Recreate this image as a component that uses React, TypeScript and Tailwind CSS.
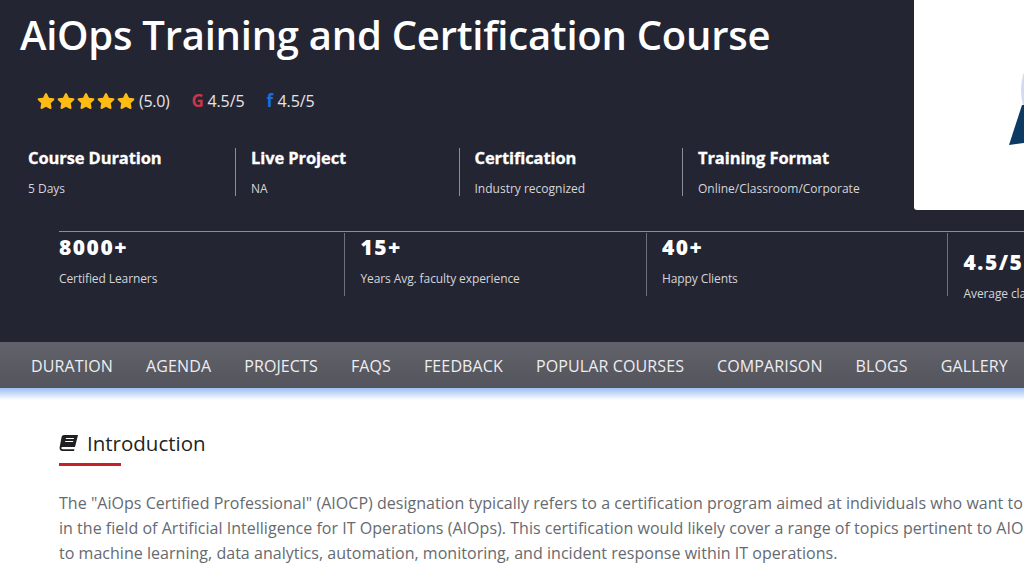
import { FaStar } from "react-icons/fa";

const facts = [
  { title: "Course Duration", value: "5 Days" },
  { title: "Live Project", value: "NA" },
  { title: "Certification", value: "Industry recognized" },
  { title: "Training Format", value: "Online/Classroom/Corporate" },
];

const stats = [
  { top: "8000+", label: "Certified Learners" },
  { top: "15+", label: "Years Avg. faculty experience" },
  { top: "40+", label: "Happy Clients" },
  { top: "4.5/5", label: "Average class rating" },
];

const navItems = ["DURATION", "AGENDA", "PROJECTS", "FAQS", "FEEDBACK", "POPULAR COURSES", "COMPARISON", "BLOGS", "GALLERY"];

export default function App() {
  return (
    <div className="w-[1024px] h-[576px] overflow-hidden bg-white font-['Open_Sans','Noto_Sans',sans-serif]">
      {/* hero */}
      <section className="h-[342px] bg-[#242533] text-white overflow-hidden">
        <div className="flex h-[210px]">
          <div className="w-[914px] shrink-0">
            <h1 className="pl-5 pt-[10px] text-[40px] leading-[50px] font-semibold tracking-[-0.25px] whitespace-nowrap">
              AiOps Training and Certification Course
            </h1>

            <div className="flex items-center pl-[37px] mt-[29px] h-[24px] text-[16px] text-[#e4e4e8]">
              <div className="flex gap-[2px]">
                {[0, 1, 2, 3, 4].map((i) => (
                  <FaStar key={i} size={18} className="text-[#fdbb13]" />
                ))}
              </div>
              <span className="ml-[4px] tracking-[-0.3px]">(5.0)</span>
              <span className="ml-[22px] w-[14px] font-bold text-[17px] text-[#c8364a]">G</span>
              <span className="ml-[2px] tracking-[-0.1px]">4.5/5</span>
              <span className="ml-[22px] w-[8px] font-bold text-[17px] text-[#1570e0]">f</span>
              <span className="ml-[3px] tracking-[-0.1px]">4.5/5</span>
            </div>

            {/* course facts */}
            <div className="flex pl-[28px] mt-[35px]">
              {facts.map((f, i) => (
                <div key={f.title} className={i === 0 ? "w-[207px]" : "w-[223.5px] border-l border-[#8d8e99] pl-[15px]"}>
                  <div className="text-[16.5px] leading-[20px] font-bold tracking-[-0.1px] [-webkit-text-stroke:0.3px_white] whitespace-nowrap">{f.title}</div>
                  <div className="mt-[13px] text-[12px] leading-[15px] text-[#d5d5da] whitespace-nowrap">{f.value}</div>
                </div>
              ))}
            </div>
          </div>

          <div className="flex-1 bg-white rounded-bl-[3px] overflow-hidden">
            {/* visible bit of the course logo */}
            <svg width="110" height="210" viewBox="0 0 110 210">
              <ellipse cx="130" cy="90" rx="23" ry="36" fill="#d5d8f5" />
              <path d="M108 105 L110 105 L110 143 L95 145 Z" fill="#0d3a63" />
            </svg>
          </div>
        </div>

        {/* stats */}
        <div className="ml-[59px] mt-[21px] w-[1200px] border-t border-[#8d8e99] flex">
          {stats.map((s, i) => (
            <div
              key={s.top}
              className={
                i === 0
                  ? "w-[285px] h-[63px] mt-[1px]"
                  : "w-[301.5px] h-[63px] mt-[1px] border-l border-[#6f707c] pl-[15.5px]"
              }
            >
              <div className={`font-extrabold text-[21px] leading-[26px] tracking-[1.5px] ${i === 3 ? "mt-[16px]" : "mt-[1px]"}`}>
                {s.top}
              </div>
              <div className="mt-[10px] text-[12px] leading-[17px] tracking-[-0.1px] text-[#d5d5da] whitespace-nowrap">{s.label}</div>
            </div>
          ))}
        </div>
      </section>

      {/* section nav */}
      <nav className="h-[46px] pt-[1px] bg-gradient-to-b from-[#62626b] to-[#54545d] flex items-center gap-[33px] pl-[31px] text-[16px] tracking-[0.12px] text-[#eeeef0] whitespace-nowrap">
        {navItems.map((n) => (
          <span key={n}>{n}</span>
        ))}
      </nav>
      <div className="h-[12px] bg-gradient-to-b from-[#9dbdf2] to-white" />

      {/* intro */}
      <section className="pl-[59px] pt-[28px]">
        <div className="flex items-center h-[30px] text-[#1f1f24]">
          <svg width="20" height="18" viewBox="0 0 20 18" fill="currentColor">
            <path d="M5 1 H19 L16 13 H3.5 C2.5 13 2 13.8 2.4 14.5 C2.7 15 3.2 15.2 3.8 15.2 H15.5 L15 17 H3.5 C1.5 17 0.3 15.5 0.6 13.6 L2.6 3 C2.9 1.8 3.8 1 5 1 Z" />
            <path d="M7 4 H15 L14.7 5 H6.7 Z M6.3 7 H14.3 L14 8 H6 Z" fill="#ffffff" />
          </svg>
          <h2 className="ml-[8px] pt-[1px] text-[20.5px] font-medium">Introduction</h2>
        </div>
        <div className="mt-[5px] w-[62px] h-[3px] bg-[#c8202a]" />
        <p className="mt-[25px] w-[1100px] text-[16px] leading-[25px] text-[#666a70] tracking-[0.03px]">
          The "AiOps Certified Professional" (AIOCP) designation typically refers to a certification program aimed at individuals who want to
          <br />
          in the field of Artificial Intelligence for IT Operations (AIOps). This certification would likely cover a range of topics pertinent to AIOps
          <br />
          to machine learning, data analytics, automation, monitoring, and incident response within IT operations.
        </p>
      </section>
    </div>
  );
}
